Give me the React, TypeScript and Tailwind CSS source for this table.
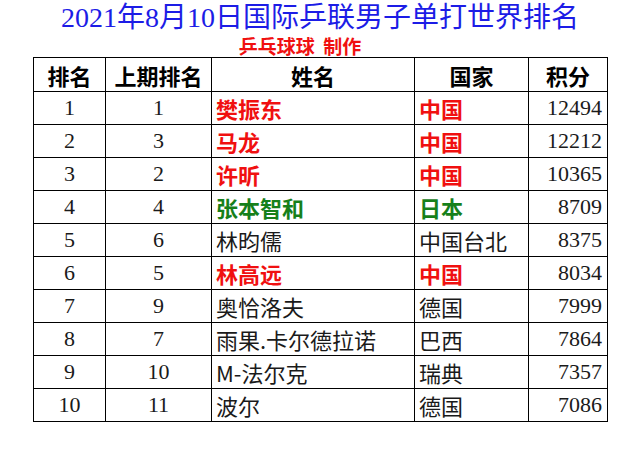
import type { JSX } from 'react'

type Row = {
  rank: number
  prev: number
  name: string
  country: string
  points: number
  tone: 'red' | 'green' | 'plain'
}

const rows: Row[] = [
  { rank: 1, prev: 1, name: '樊振东', country: '中国', points: 12494, tone: 'red' },
  { rank: 2, prev: 3, name: '马龙', country: '中国', points: 12212, tone: 'red' },
  { rank: 3, prev: 2, name: '许昕', country: '中国', points: 10365, tone: 'red' },
  { rank: 4, prev: 4, name: '张本智和', country: '日本', points: 8709, tone: 'green' },
  { rank: 5, prev: 6, name: '林昀儒', country: '中国台北', points: 8375, tone: 'plain' },
  { rank: 6, prev: 5, name: '林高远', country: '中国', points: 8034, tone: 'red' },
  { rank: 7, prev: 9, name: '奥恰洛夫', country: '德国', points: 7999, tone: 'plain' },
  { rank: 8, prev: 7, name: '雨果.卡尔德拉诺', country: '巴西', points: 7864, tone: 'plain' },
  { rank: 9, prev: 10, name: 'M-法尔克', country: '瑞典', points: 7357, tone: 'plain' },
  { rank: 10, prev: 11, name: '波尔', country: '德国', points: 7086, tone: 'plain' }
]

const toneClass = {
  red: 'font-semibold text-[#f01010]',
  green: 'font-semibold text-[#16801a]',
  plain: 'font-normal text-[#1a1a1a]'
}

const cjk = "font-['Noto_Sans_CJK_SC',sans-serif]"
const serif = "font-['Liberation_Serif','Noto_Sans_CJK_SC',serif]"

export default function App(): JSX.Element {
  return (
    <div className="h-[458px] w-[640px] bg-white">
      <div
        className={`pt-[2px] text-center text-[28px] leading-[32px] text-[#1c1ce6] ${serif}`}
      >
        2021年8月10日国际乒联男子单打世界排名
      </div>
      <div
        className={`pr-[40px] text-center text-[19px] font-bold leading-[23px] text-[#f01010] ${cjk}`}
      >
        乒乓球球&nbsp;&nbsp;制作
      </div>
      <table className="ml-[33px] w-[574px] table-fixed border-collapse">
        <colgroup>
          <col className="w-[72px]" />
          <col className="w-[106px]" />
          <col className="w-[203px]" />
          <col className="w-[114px]" />
          <col className="w-[79px]" />
        </colgroup>
        <thead>
          <tr className={`h-[34px] text-[22px] font-semibold text-black ${cjk}`}>
            <th className="border border-black p-0 leading-none">排名</th>
            <th className="border border-black p-0 leading-none">上期排名</th>
            <th className="border border-black p-0 leading-none">姓名</th>
            <th className="border border-black p-0 leading-none">国家</th>
            <th className="border border-black p-0 leading-none">积分</th>
          </tr>
        </thead>
        <tbody>
          {rows.map((row) => (
            <tr key={row.rank} className="h-[33px]">
              <td
                className={`border border-black p-0 text-center text-[22px] leading-none text-[#1a1a1a] ${serif}`}
              >
                {row.rank}
              </td>
              <td
                className={`border border-black p-0 text-center text-[22px] leading-none text-[#1a1a1a] ${serif}`}
              >
                {row.prev}
              </td>
              <td
                className={`whitespace-nowrap border border-black py-0 pl-[4px] pr-0 text-left text-[22px] leading-none ${cjk} ${toneClass[row.tone]}`}
              >
                {row.name}
              </td>
              <td
                className={`whitespace-nowrap border border-black py-0 pl-[4px] pr-0 text-left text-[22px] leading-none ${cjk} ${toneClass[row.tone]}`}
              >
                {row.country}
              </td>
              <td
                className={`border border-black py-0 pl-0 pr-[5px] text-right text-[22px] leading-none text-[#1a1a1a] ${serif}`}
              >
                {row.points}
              </td>
            </tr>
          ))}
        </tbody>
      </table>
    </div>
  )
}
